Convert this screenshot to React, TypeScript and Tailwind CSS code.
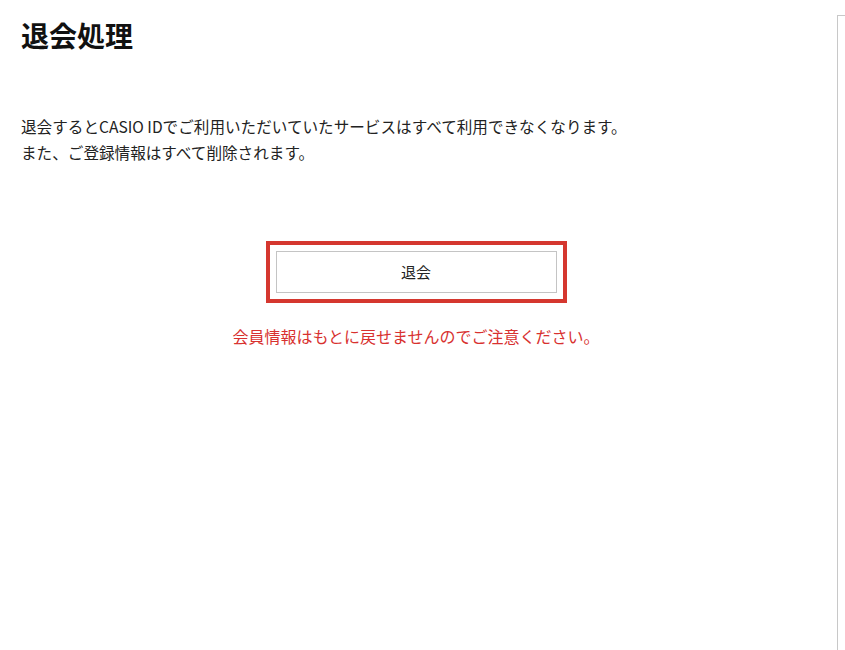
export default function App() {
  return (
    <div
      className="flex min-h-[650px] w-full bg-white text-[#222]"
      style={{ fontFamily: '"Noto Sans CJK JP", "Noto Sans", sans-serif' }}
    >
      <main className="flex w-[837px] shrink-0 flex-col pl-[21px] pr-[26px]">
        <h1 className="mt-[15px] text-[28px] font-bold leading-[40px] text-[#111]">
          退会処理
        </h1>
        <div className="mt-[58px] text-[15.6px] leading-[26px]">
          <p>退会するとCASIO IDでご利用いただいていたサービスはすべて利用できなくなります。</p>
          <p>また、ご登録情報はすべて削除されます。</p>
        </div>
        <div className="mt-[76px] flex flex-col items-center">
          <div className="border-4 border-[#d5372f] p-[6px]">
            <button className="flex h-[42px] w-[281px] items-center justify-center border border-[#c4c4c4] bg-white text-[15px] text-[#222]">
              退会
            </button>
          </div>
          <p className="mt-[21px] text-[16px] leading-[24px] text-[#d8312f]">
            会員情報はもとに戻せませんのでご注意ください。
          </p>
        </div>
      </main>
      <aside className="mt-[15px] flex-1 border-l border-t border-[#c8c8c8]" />
    </div>
  );
}
